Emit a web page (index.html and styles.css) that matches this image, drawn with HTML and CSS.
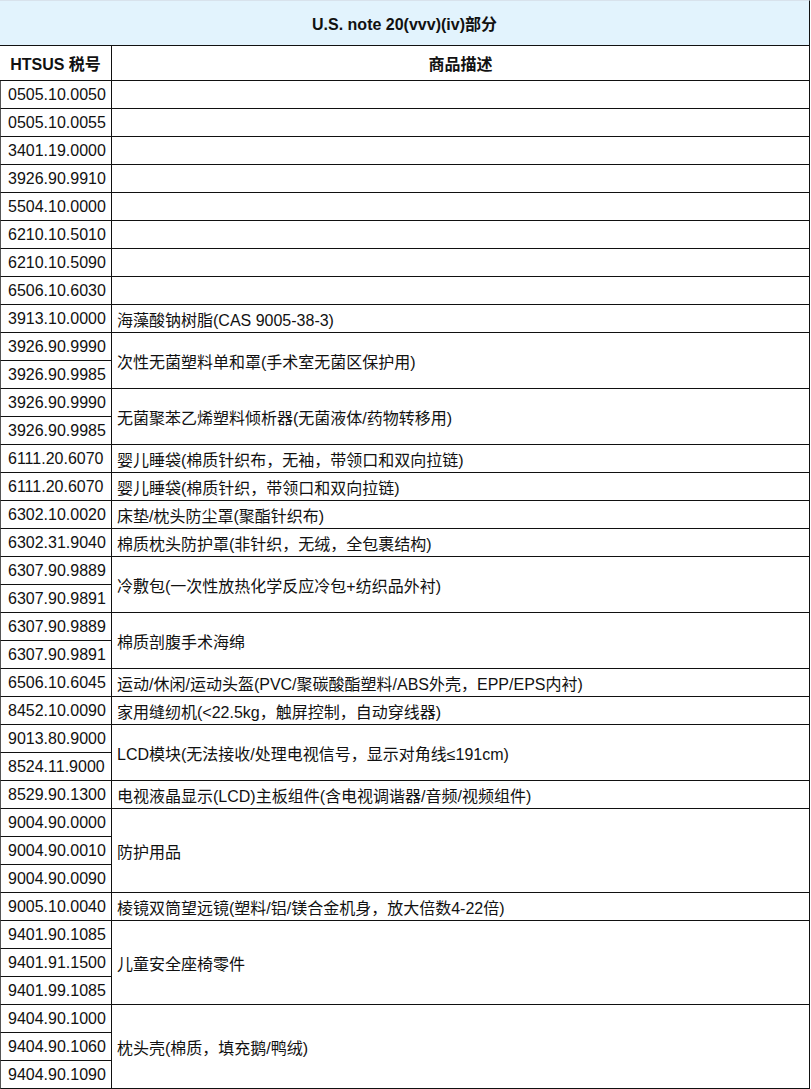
FILE: index.html
```html
<!DOCTYPE html>
<html lang="zh-CN">
<head>
<meta charset="utf-8">
<title>U.S. note 20(vvv)(iv)部分</title>
<link rel="stylesheet" href="styles.css">
</head>
<body>
<div class="sheet">
  <div class="title">U.S. note 20(vvv)(iv)部分</div>
  <div class="head head-code">HTSUS 税号</div>
  <div class="head head-desc">商品描述</div>

  <div class="code">0505.10.0050</div><div class="desc"></div>
  <div class="code">0505.10.0055</div><div class="desc"></div>
  <div class="code">3401.19.0000</div><div class="desc"></div>
  <div class="code">3926.90.9910</div><div class="desc"></div>
  <div class="code">5504.10.0000</div><div class="desc"></div>
  <div class="code">6210.10.5010</div><div class="desc"></div>
  <div class="code">6210.10.5090</div><div class="desc"></div>
  <div class="code">6506.10.6030</div><div class="desc"></div>
  <div class="code">3913.10.0000</div><div class="desc">海藻酸钠树脂(CAS 9005-38-3)</div>
  <div class="code">3926.90.9990</div><div class="desc span2">次性无菌塑料单和罩(手术室无菌区保护用)</div>
  <div class="code">3926.90.9985</div>
  <div class="code">3926.90.9990</div><div class="desc span2">无菌聚苯乙烯塑料倾析器(无菌液体/药物转移用)</div>
  <div class="code">3926.90.9985</div>
  <div class="code">6111.20.6070</div><div class="desc">婴儿睡袋(棉质针织布，无袖，带领口和双向拉链)</div>
  <div class="code">6111.20.6070</div><div class="desc">婴儿睡袋(棉质针织，带领口和双向拉链)</div>
  <div class="code">6302.10.0020</div><div class="desc">床垫/枕头防尘罩(聚酯针织布)</div>
  <div class="code">6302.31.9040</div><div class="desc">棉质枕头防护罩(非针织，无绒，全包裹结构)</div>
  <div class="code">6307.90.9889</div><div class="desc span2">冷敷包(一次性放热化学反应冷包+纺织品外衬)</div>
  <div class="code">6307.90.9891</div>
  <div class="code">6307.90.9889</div><div class="desc span2">棉质剖腹手术海绵</div>
  <div class="code">6307.90.9891</div>
  <div class="code">6506.10.6045</div><div class="desc">运动/休闲/运动头盔(PVC/聚碳酸酯塑料/ABS外壳，EPP/EPS内衬)</div>
  <div class="code">8452.10.0090</div><div class="desc">家用缝纫机(&lt;22.5kg，触屏控制，自动穿线器)</div>
  <div class="code">9013.80.9000</div><div class="desc span2">LCD模块(无法接收/处理电视信号，显示对角线≤191cm)</div>
  <div class="code">8524.11.9000</div>
  <div class="code">8529.90.1300</div><div class="desc">电视液晶显示(LCD)主板组件(含电视调谐器/音频/视频组件)</div>
  <div class="code">9004.90.0000</div><div class="desc span3">防护用品</div>
  <div class="code">9004.90.0010</div>
  <div class="code">9004.90.0090</div>
  <div class="code">9005.10.0040</div><div class="desc">棱镜双筒望远镜(塑料/铝/镁合金机身，放大倍数4-22倍)</div>
  <div class="code">9401.90.1085</div><div class="desc span3">儿童安全座椅零件</div>
  <div class="code">9401.91.1500</div>
  <div class="code">9401.99.1085</div>
  <div class="code">9404.90.1000</div><div class="desc span3">枕头壳(棉质，填充鹅/鸭绒)</div>
  <div class="code">9404.90.1060</div>
  <div class="code">9404.90.1090</div>
</div>
</body>
</html>
```

FILE: styles.css
```css
html, body {
  margin: 0;
  padding: 0;
  background: #ffffff;
}

body {
  font-family: "Liberation Sans", "Noto Sans CJK SC", sans-serif;
  font-size: 16px;
  color: #111111;
}

.sheet {
  display: grid;
  grid-template-columns: 112px 698px;
  grid-template-rows: 46px 35px repeat(36, 28px);
  width: 810px;
}

.sheet > div {
  box-sizing: border-box;
  display: flex;
  align-items: center;
  white-space: nowrap;
  overflow: hidden;
}

.title {
  grid-column: 1 / -1;
  justify-content: center;
  background: #e2f3fd;
  border-top: 1px solid #d8e2ec;
  border-right: 1px solid #111111;
  border-bottom: 1px solid #111111;
  font-weight: bold;
}

.head {
  justify-content: center;
  font-weight: bold;
  border-right: 1px solid #111111;
  border-bottom: 1px solid #111111;
}

.code {
  padding-left: 7px;
  border-left: 1px solid #555555;
  border-right: 1px solid #111111;
  border-bottom: 1px solid #111111;
}

.desc {
  padding-left: 5px;
  border-right: 1px solid #111111;
  border-bottom: 1px solid #111111;
}

.span2 {
  grid-row: span 2;
}

.span3 {
  grid-row: span 3;
}
```
